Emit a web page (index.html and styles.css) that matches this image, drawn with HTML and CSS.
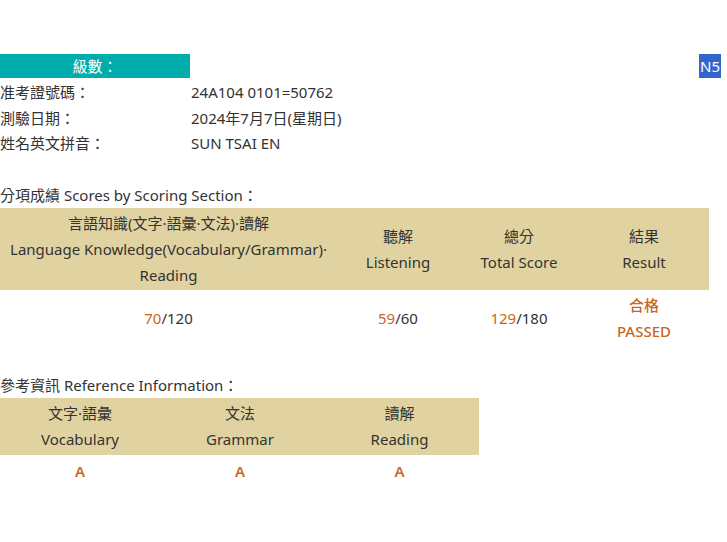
FILE: index.html
```html
<!DOCTYPE html>
<html lang="zh-Hant">
<head>
<meta charset="utf-8">
<title>成績</title>
<link rel="stylesheet" href="styles.css">
</head>
<body>
<div class="page">
  <div class="level-row">
    <div class="level-label">級數：</div>
    <div class="level-badge">N5</div>
  </div>
  <div class="info">
    <div class="info-label">准考證號碼：</div><div class="info-value">24A104 0101=50762</div>
    <div class="info-label">測驗日期：</div><div class="info-value">2024年7月7日(星期日)</div>
    <div class="info-label">姓名英文拼音：</div><div class="info-value">SUN TSAI EN</div>
  </div>
  <div class="blank"></div>
  <div class="section-title">分項成績 Scores by Scoring Section：</div>
  <div class="scores">
    <div class="th">言語知識(文字·語彙·文法)·讀解<br>Language Knowledge(Vocabulary/Grammar)·<br>Reading</div>
    <div class="th">聽解<br>Listening</div>
    <div class="th">總分<br>Total Score</div>
    <div class="th">結果<br>Result</div>
    <div class="td"><span class="hl">70</span>/120</div>
    <div class="td"><span class="hl">59</span>/60</div>
    <div class="td"><span class="hl">129</span>/180</div>
    <div class="td hl result">合格<br>PASSED</div>
  </div>
  <div class="blank"></div>
  <div class="section-title">參考資訊 Reference Information：</div>
  <div class="ref">
    <div class="th">文字·語彙<br>Vocabulary</div>
    <div class="th">文法<br>Grammar</div>
    <div class="th">讀解<br>Reading</div>
    <div class="td hl grade">A</div>
    <div class="td hl grade">A</div>
    <div class="td hl grade">A</div>
  </div>
</div>
</body>
</html>
```

FILE: styles.css
```css
html, body {
  margin: 0;
  padding: 0;
  background: #ffffff;
}
body {
  font-family: "Noto Sans", "Noto Sans CJK TC", sans-serif;
  font-size: 15px;
  color: #333333;
}
.page {
  padding-top: 54px;
  width: 721px;
}
.level-row {
  display: flex;
  justify-content: space-between;
  height: 24px;
}
.level-label {
  width: 190px;
  background: #00adad;
  color: #ffffff;
  text-align: center;
  line-height: 24px;
}
.level-badge {
  background: #3366cc;
  color: #ffffff;
  line-height: 24px;
  padding: 0 1px;
}
.info {
  display: grid;
  grid-template-columns: 191px auto;
  grid-auto-rows: 25.5px;
  align-items: center;
  margin-top: 1px;
}
.blank {
  height: 26px;
}
.section-title {
  line-height: 26px;
  height: 26px;
}
.scores {
  display: grid;
  grid-template-columns: 337px 122px 120px 130px;
  width: 709px;
}
.ref {
  display: grid;
  grid-template-columns: 160px 160px 159px;
  width: 479px;
}
.th,
.td {
  text-align: center;
  line-height: 26px;
  padding: 2px 0;
  display: flex;
  align-items: center;
  justify-content: center;
}
.th {
  background: #e1d3a1;
}
.ref .th {
  padding: 2.5px 0;
}
.ref .td {
  padding: 3px 0;
}
.hl {
  color: #c8661e;
}
.result {
  font-weight: 500;
}
.grade {
  font-weight: 600;
}
```
